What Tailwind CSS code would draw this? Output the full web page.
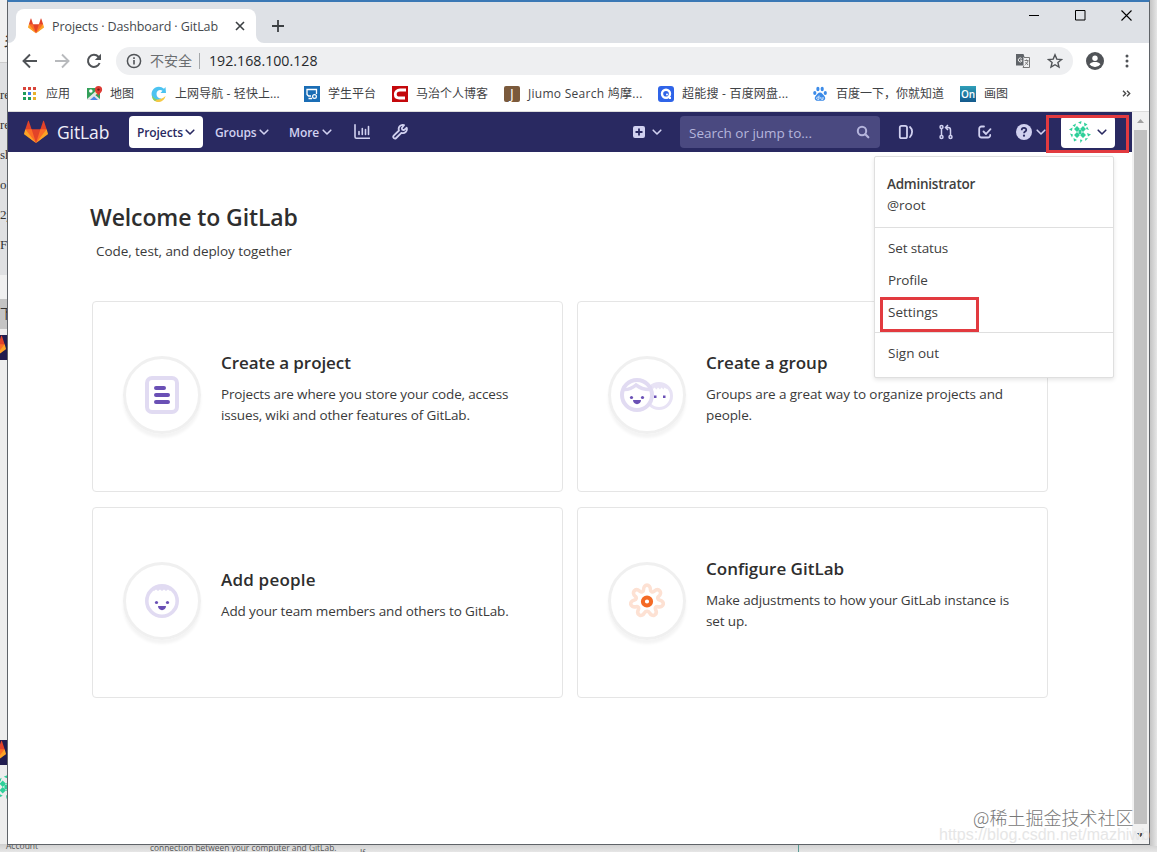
<!DOCTYPE html>
<html lang="zh-CN">
<head>
  <meta charset="UTF-8">
  <meta name="viewport" content="width=device-width, initial-scale=1.0">
  <title>Projects · Dashboard · GitLab</title>
  <script src="https://cdn.jsdelivr.net/npm/@tailwindcss/browser@4"></script>
  <style>
    body {
      font-family: "Open Sans", "Noto Sans CJK SC", sans-serif;
    }
  </style>
</head>
<body class="relative w-[1157px] h-[852px] overflow-hidden bg-[#e9e9e9] text-[#2e2e2e]">
  <!-- Shared symbols -->
  <svg class="hidden">
    <symbol id="tanuki" viewBox="0 0 36 36">
      <path fill="#e24329" d="M2 14l9.38 9v-9l-4-12.28c-.205-.632-1.176-.632-1.38 0z"/>
      <path fill="#e24329" d="M34 14l-9.38 9v-9l4-12.28c.205-.632 1.176-.632 1.38 0z"/>
      <path fill="#e24329" d="M18 34.38L3 14h30z"/>
      <path fill="#fc6d26" d="M18 34.38L11.38 14H2l4 11zM18 34.38L24.62 14H34l-4 11z"/>
      <path fill="#fca326" d="M2 14L.1 20.16c-.18.565 0 1.2.5 1.56L18 34.38zM34 14l1.9 6.16c.18.565 0 1.2-.5 1.56L18 34.38z"/>
    </symbol>
    <symbol id="chevron" viewBox="0 0 10 10">
      <path d="M1.200 3.200L5 7l3.800-3.800" fill="none" stroke="currentColor" stroke-width="1.600" stroke-linecap="round" stroke-linejoin="round"/>
    </symbol>
    <symbol id="identicon" viewBox="0 0 22 22">
      <g fill="#2fd09a">
        <path d="M8 5l3 3-3 3-3-3zM14 5l3 3-3 3-3-3zM8 11l3 3-3 3-3-3zM14 11l3 3-3 3-3-3z"/>
        <path d="M9.500 9h3v4h-3z"/>
        <path d="M3.500 4.500l3.500-2-1 3.500zM9 1.500l3.500-1.500-.5 3zM15 1.500l3.500 2-3 2zM18 5.500l2 3.500-3-1zM18 12l4 1.500-3 2zM16 17.500l3-.5-2.500 3zM11 18.500l2.500.5-2 3zM4.500 17l3.500 2-3 1.500zM1 12.500l3 1-1 3zM0 8.500l3.500-2-.5 3.500z"/>
      </g>
    </symbol>
  </svg>

  <!-- Windows behind the browser -->
  <div class="absolute left-0 top-0 w-2 h-full overflow-hidden bg-[#ededed] text-[13px] leading-[30px] font-['Liberation_Serif'] text-[#333]">
    <div class="h-[63px] bg-[#f0f0f0] border-b border-[#ccc] pt-[26px] pl-[3px] text-lg">乡</div>
    <div class="h-[212px] bg-[#dfe0e2] pt-[17px]">
      <div>re</div><div>re</div><div>sh</div><div>ol</div><div>2y</div><div>F7</div>
    </div>
    <div class="h-6 bg-[#f0f0f0]"></div>
    <div class="h-[30px] bg-[#c4c4c4]">下</div>
    <div class="h-[6px]"></div>
    <div class="h-[25px] bg-[#201c4f]"><svg class="w-6 h-6 -ml-[18px]"><use href="#tanuki"/></svg></div>
    <div class="h-[380px]"></div>
    <div class="h-[25px] bg-[#201c4f]"><svg class="w-6 h-6 -ml-[18px]"><use href="#tanuki"/></svg></div>
    <div class="h-[10px]"></div>
    <div class="h-[24px]"><svg class="w-6 h-6 -ml-[6px]"><use href="#identicon"/></svg></div>
  </div>
  <div class="absolute left-0 top-[844px] w-full h-2 overflow-hidden bg-linear-to-b from-[#cfcfcf] to-[#e6e6e6] text-[#555]">
    <span class="absolute left-[6px] -top-[5px] text-[8.500px] leading-[14px]">Account</span>
    <span class="absolute left-[150px] -top-[3px] text-[8.400px] leading-[14px] whitespace-nowrap">connection between your computer and GitLab.</span>
    <span class="absolute left-[360px] top-[2px] text-[8.400px] leading-[14px]">If</span>
    <span class="absolute left-[798px] top-0 w-px h-2 bg-[#5a9a94]"></span>
  </div>
  <div class="absolute left-[1150px] top-0 w-[7px] h-[846px] bg-linear-to-r from-[#c4c4c4] to-[#e6e6e6]"></div>

  <!-- Browser window -->
  <div class="absolute left-[7px] top-0 w-[1143px] h-[845px] flex flex-col bg-white border border-[#5f6368] border-t-2 border-t-[#3a78b5]">

    <!-- Tab strip -->
    <div class="h-[41px] shrink-0 flex items-end bg-[#dee1e6]">
      <svg class="w-2 h-2 text-white" viewBox="0 0 8 8"><path fill="currentColor" d="M8 0v8H0a8 8 0 0 0 8-8z"/></svg>
      <div class="w-[240px] h-[34px] flex items-center bg-white rounded-t-lg pl-3">
        <svg class="w-4 h-4 shrink-0"><use href="#tanuki"/></svg>
        <span class="w-[165px] ml-2 pt-[2px] text-[12.500px] tracking-[-0.09px] whitespace-nowrap text-[#45494d]">Projects · Dashboard · GitLab</span>
        <svg class="w-[10px] h-[10px] ml-[18px]" viewBox="0 0 10 10"><path d="M1 1l8 8M9 1L1 9" stroke="#3c4043" stroke-width="1.600"/></svg>
      </div>
      <svg class="w-2 h-2 text-white" viewBox="0 0 8 8"><path fill="currentColor" d="M0 0v8h8a8 8 0 0 1-8-8z"/></svg>
      <svg class="w-3 h-3 ml-2 mb-[11px]" viewBox="0 0 12 12"><path d="M6 0v12M0 6h12" stroke="#3c4043" stroke-width="1.800"/></svg>
      <div class="grow"></div>
      <div class="h-full flex items-start pt-[8px] gap-[35px] pr-[17px] text-black">
        <svg class="w-[11px] h-[11px]" viewBox="0 0 11 11"><path d="M0 5.500h10" stroke="currentColor"/></svg>
        <svg class="w-[11px] h-[11px]" viewBox="0 0 11 11"><path d="M.5.5h9.500v9.500H.5z" fill="none" stroke="currentColor"/></svg>
        <svg class="w-[11px] h-[11px]" viewBox="0 0 11 11"><path d="M.5.5l10 10M10.500.5l-10 10" stroke="currentColor" stroke-width="1.100"/></svg>
      </div>
    </div>

    <!-- Toolbar -->
    <div class="h-9 shrink-0 flex items-center pl-[14px] text-[#505357]">
      <svg class="w-4 h-4" viewBox="0 0 16 16"><path d="M15 8H2M8 1.500L1.500 8 8 14.500" fill="none" stroke="currentColor" stroke-width="1.900"/></svg>
      <svg class="w-4 h-4 ml-4 text-[#b8babd]" viewBox="0 0 16 16"><path d="M1 8h13M8 1.500L14.500 8 8 14.500" fill="none" stroke="currentColor" stroke-width="1.900"/></svg>
      <svg class="w-4 h-4 ml-4" viewBox="0 0 16 16"><path d="M13.600 10A6 6 0 1 1 12.400 3.800L14 5.400" fill="none" stroke="currentColor" stroke-width="2"/><path fill="currentColor" d="M15 .8V7H8.800z"/></svg>
      <div class="w-[957px] h-7 ml-[14px] flex items-center rounded-full bg-[#eeeff1] pl-[10px]">
        <svg class="w-4 h-4" viewBox="0 0 16 16"><circle cx="8" cy="8" r="6.600" fill="none" stroke="currentColor" stroke-width="1.500"/><path d="M8 7v4.500M8 4.300v1.700" stroke="currentColor" stroke-width="1.600"/></svg>
        <span class="w-[42px] ml-2 text-sm whitespace-nowrap text-[#6a6d70]">不安全</span>
        <span class="w-px h-4 ml-[7px] bg-[#a5a8ab]"></span>
        <span class="w-[110px] ml-[9px] text-[14.200px] whitespace-nowrap text-[#27292c]">192.168.100.128</span>
        <div class="grow"></div>
        <svg class="w-4 h-4" viewBox="0 0 16 16"><path fill="#5f6368" d="M1 1h7.500l1 3h-1v8.500H1z"/><path d="M9 4.500h5.500v10H8l1-2" fill="none" stroke="#777" stroke-width="1"/><path d="M9.500 7.500h4M11.500 6.500v1M13 8c-.5 2-2 3-3 3.500M10.500 9l2.500 3" fill="none" stroke="#777"/><path d="M6.700 5.500a2 2 0 1 0 0 2.900V7.100H5" fill="none" stroke="#eee" stroke-width="1"/></svg>
        <svg class="w-4 h-4 ml-4 mr-[10px]" viewBox="0 0 16 16"><path d="M8 1.800l1.800 4.300 4.700.4-3.600 3 1.100 4.600L8 11.700l-4 2.400 1.100-4.600-3.600-3 4.700-.4z" fill="none" stroke="currentColor" stroke-width="1.400"/></svg>
      </div>
      <svg class="w-[18px] h-[18px] ml-[13px]" viewBox="0 0 18 18"><circle cx="9" cy="9" r="9" fill="currentColor"/><circle cx="9" cy="6.200" r="2.700" fill="#fff"/><path fill="#fff" d="M3.500 12.300C4.500 10.600 7 10 9 10s4.500.6 5.500 2.300A6.500 6.500 0 0 1 9 15a6.500 6.500 0 0 1-5.500-2.700z"/></svg>
      <svg class="w-4 h-4 ml-[15px]" viewBox="0 0 16 16" fill="currentColor"><circle cx="8" cy="3" r="1.500"/><circle cx="8" cy="8" r="1.500"/><circle cx="8" cy="13" r="1.500"/></svg>
    </div>

    <!-- Bookmarks bar -->
    <div class="h-[33px] shrink-0 flex items-center pl-[14px] pb-[3px] border-b border-[#dcdcdc] text-xs whitespace-nowrap text-[#3f4245]">
      <div class="w-[65px] flex items-center gap-2">
        <svg class="w-4 h-4" viewBox="0 0 16 16">
          <path fill="#d9453a" d="M1 1h3v3H1zM6 1h3v3H6zM11 1h3v3h-3z"/>
          <path fill="#1f9d5b" d="M1 6h3v3H1zM1 11h3v3H1z"/><path fill="#3f7de0" d="M6 6h3v3H6z"/>
          <path fill="#e8b02c" d="M11 6h3v3h-3zM11 11h3v3h-3z"/><path fill="#1f9d5b" d="M6 11h3v3H6z"/>
        </svg>
        <span>应用</span>
      </div>
      <div class="w-16 flex items-center gap-[7px]">
        <svg class="w-4 h-4" viewBox="0 0 16 16">
          <path fill="#34a05a" d="M0 2h13v12H0z"/><path fill="#4a86e8" d="M6.500 8l6.500 6H1z"/><path fill="#e5e5e5" d="M0 14v-1L10 4l2 2-9 8zM7 8l6 5v1h-2L5.500 9z"/><path fill="#f4c63a" d="M8 6l3-3 2 2-3 3z"/>
          <circle cx="3.800" cy="5" r="1.800" fill="#fff"/>
          <path fill="#dd3b34" d="M11.500 0a3.600 3.600 0 0 0-3.600 3.700c0 2.800 3.100 3.300 3.600 6.800.5-3.500 3.600-4 3.600-6.800A3.600 3.600 0 0 0 11.500 0z"/>
          <circle cx="11.500" cy="3.600" r="1.200" fill="#7c1713"/>
        </svg>
        <span>地图</span>
      </div>
      <div class="w-[153px] flex items-center gap-2">
        <svg class="w-4 h-4" viewBox="0 0 16 16">
          <path fill="#4cc3f1" d="M14.500 1l.5 6H9.500l2-2.200C9 3 5.500 4.500 5.500 8c0 3 2.500 4.800 5 4.500-2 2.500-6.500 2.500-8.700-.5C-.6 8.500.6 4 4 1.800 7-.1 10.500.5 13 2.700z"/>
          <path fill="#f6c945" d="M1 10.500c2.500 4 9 4 13.500-.5-1 4-4 6-7.500 6-3 0-5.300-2.300-6-5.500z"/>
          <path fill="#7fd06a" d="M1 9c.8 2.500 3 4.200 5.500 4.500L4 15c-2-1-3.200-3.500-3-6z"/>
        </svg>
        <span class="tracking-[0.1px]">上网导航 - 轻快上...</span>
      </div>
      <div class="w-[88px] flex items-center gap-2">
        <svg class="w-4 h-4" viewBox="0 0 16 16"><path fill="#1a6db5" d="M0 0h16v16H0z"/><path d="M7 10H4.500L3 8.500V3.500h9.500V8M4.500 12.500H8" fill="none" stroke="#fff" stroke-width="1.300"/><circle cx="10.500" cy="10.500" r="1.900" fill="none" stroke="#fff" stroke-width="1.200"/></svg>
        <span>学生平台</span>
      </div>
      <div class="w-28 flex items-center gap-2">
        <svg class="w-4 h-4" viewBox="0 0 16 16"><path fill="#c4080c" d="M0 0h16v16H0z"/><path d="M14 4H8C5 4 3.300 5.800 3.300 8.200c0 2.500 1.500 3.800 4 3.800H13" fill="none" stroke="#fff" stroke-width="2.800"/></svg>
        <span>马治个人博客</span>
      </div>
      <div class="w-[154px] flex items-center gap-2">
        <span class="w-4 h-4 rounded-xs bg-[#7b5a3c] text-white text-[14px] leading-[15px] text-center">J</span>
        <span class="tracking-[0.28px]">Jiumo Search 鸠摩...</span>
      </div>
      <div class="w-[154px] flex items-center gap-2">
        <svg class="w-4 h-4" viewBox="0 0 16 16"><rect width="16" height="16" rx="3" fill="#2f64e8"/><circle cx="8" cy="7.800" r="4" fill="none" stroke="#fff" stroke-width="2.400"/><circle cx="9" cy="8.500" r="1" fill="#fff"/><path d="M11 12h2" stroke="#fff" stroke-width="1.800"/></svg>
        <span class="tracking-[0.22px]">超能搜 - 百度网盘...</span>
      </div>
      <div class="w-[148px] flex items-center gap-2">
        <svg class="w-4 h-4" viewBox="0 0 16 16" fill="#3c8be8"><ellipse cx="2.800" cy="7" rx="1.600" ry="2.100"/><ellipse cx="5.900" cy="3" rx="1.600" ry="2.300"/><ellipse cx="10.200" cy="3" rx="1.600" ry="2.300"/><ellipse cx="13.300" cy="7" rx="1.600" ry="2.100"/><path d="M8 6.500c2 0 2.800 2 4.300 3.500 1.800 2 .8 4.800-1.800 4.800H5.500c-2.600 0-3.600-2.800-1.800-4.800C5.200 8.500 6 6.500 8 6.500z"/><path d="M7 9.500v3.800H5.600c-1.400 0-1.400-2.200 0-2.200H7M8.800 11v1.300c0 .8.400 1 1 1h1.200V11" fill="none" stroke="#fff" stroke-width=".8"/></svg>
        <span>百度一下，你就知道</span>
      </div>
      <div class="flex items-center gap-2">
        <span class="w-4 h-4 bg-linear-to-b from-[#2f9fb8] to-[#14598c] text-white text-[10px] leading-4 text-center font-semibold">On</span>
        <span>画图</span>
      </div>
      <div class="grow"></div>
      <svg class="w-[9px] h-[7px] mr-[18px]" viewBox="0 0 9 7"><path d="M1 .7L3.700 3.500 1 6.300M5 .7l2.700 2.800L5 6.300" fill="none" stroke="#4a4a4a" stroke-width="1.400"/></svg>
    </div>

    <!-- Page -->
    <div class="grow flex min-h-0">
      <div class="w-[1124px] shrink-0 flex flex-col">

        <!-- GitLab navbar -->
        <nav class="h-10 shrink-0 flex items-center pl-4 bg-[#292961] text-[#d1d1f0] text-[12px] font-semibold tracking-[-0.1px] whitespace-nowrap">
          <svg class="w-6 h-6"><use href="#tanuki"/></svg>
          <span class="w-[81px] shrink-0 pl-[9px] text-[17.500px] font-normal text-[#f0f0fa]">GitLab</span>
          <div class="w-[74px] h-8 flex items-center justify-between rounded bg-white px-2 text-[#292961]">
            <span class="pt-px">Projects</span><svg class="w-[10px] h-[10px] shrink-0"><use href="#chevron"/></svg>
          </div>
          <div class="w-[54px] ml-3 flex items-center justify-between"><span class="pt-px">Groups</span><svg class="w-[10px] h-[10px] shrink-0"><use href="#chevron"/></svg></div>
          <div class="w-[43px] ml-5 flex items-center justify-between"><span class="pt-px">More</span><svg class="w-[10px] h-[10px] shrink-0"><use href="#chevron"/></svg></div>
          <svg class="w-4 h-4 ml-[22px]" viewBox="0 0 16 16"><path d="M1 .8v12c0 1 .4 1.400 1.400 1.400h13M5 10.500V7.500M8.300 10.500V4.500M11.500 10.500v-5M14.500 10.500V2.500" fill="none" stroke="currentColor" stroke-width="1.600" stroke-linecap="round"/></svg>
          <svg class="w-4 h-4 ml-[22px]" viewBox="0 0 16 16"><path d="M7 6.500a4 4 0 0 1 5-5.300L9.800 4l.4 1.600 1.700.5 2.800-2.300a4 4 0 0 1-5.300 5L4.200 14a1.700 1.700 0 0 1-2.500-2.300z" fill="none" stroke="currentColor" stroke-width="1.800" stroke-linejoin="round"/></svg>
          <svg class="w-3 h-3 ml-[225px]" viewBox="0 0 12 12"><path fill="currentColor" fill-rule="evenodd" d="M2 0h8a2 2 0 0 1 2 2v8a2 2 0 0 1-2 2H2a2 2 0 0 1-2-2V2a2 2 0 0 1 2-2zm3.100 2.500v2.600H2.500v1.800h2.600v2.600h1.800V6.900h2.600V5.100H6.900V2.500z"/></svg>
          <svg class="w-[10px] h-[10px] ml-[7px]"><use href="#chevron"/></svg>
          <div class="w-[200px] h-8 ml-[18px] flex items-center justify-between rounded bg-[#4a4980] pl-[9px] pr-[10px] text-[13.500px] tracking-normal font-normal text-[#b5b5dc]">
            <span class="pt-[2px]">Search or jump to...</span>
            <svg class="w-[14px] h-[14px]" viewBox="0 0 14 14"><circle cx="6" cy="6" r="4.200" fill="none" stroke="currentColor" stroke-width="2"/><path d="M9.300 9.300l3 3" stroke="currentColor" stroke-width="2.200" stroke-linecap="round"/></svg>
          </div>
          <svg class="w-4 h-4 ml-[18px]" viewBox="0 0 16 16" fill="none" stroke="currentColor" stroke-width="1.800" stroke-linecap="round"><rect x="1.800" y="1.800" width="7.200" height="12.400" rx="1.800"/><path d="M12 3c2.800 2.500 2.800 7 0 10"/></svg>
          <svg class="w-4 h-4 ml-6" viewBox="0 0 16 16" fill="none" stroke="currentColor" stroke-width="1.500"><circle cx="3.500" cy="3" r="1.500"/><circle cx="3.500" cy="13" r="1.500"/><circle cx="12.500" cy="13" r="1.500"/><path d="M3.500 4.500v7M12.500 11.500V6c0-1.500-.8-2.500-2.300-2.500H8M10 1L7.500 3.500 10 6"/></svg>
          <svg class="w-4 h-4 ml-[23px]" viewBox="0 0 16 16" fill="none" stroke="currentColor" stroke-width="1.800" stroke-linecap="round" stroke-linejoin="round"><path d="M7 2.500H4.500A2.300 2.300 0 0 0 2.200 4.800v6.400a2.300 2.300 0 0 0 2.300 2.300h6.400a2.300 2.300 0 0 0 2.300-2.300V11"/><path d="M6.500 7.500L9 10l4.500-4.800"/></svg>
          <svg class="w-4 h-4 ml-[23px]" viewBox="0 0 16 16"><circle cx="8" cy="8" r="8" fill="currentColor"/><path d="M5.700 6.200c0-3 4.700-2.900 4.600-.2 0 1.500-2.200 1.600-2.300 3.200" fill="none" stroke="#292961" stroke-width="1.700"/><circle cx="8" cy="11.700" r="1.100" fill="#292961"/></svg>
          <svg class="w-[10px] h-[10px] ml-1"><use href="#chevron"/></svg>
          <div class="w-[54px] h-8 ml-[15px] flex items-center rounded bg-white pl-2 text-[#292961]">
            <svg class="w-[22px] h-[22px]"><use href="#identicon"/></svg>
            <svg class="w-[10px] h-[10px] ml-[6px]"><use href="#chevron"/></svg>
          </div>
        </nav>

        <!-- Welcome -->
        <main class="pl-[84px] pt-[49px]">
          <h2 class="-ml-[2px] text-[23px] leading-8 tracking-[-0.1px] font-semibold">Welcome to GitLab</h2>
          <p class="ml-1 mt-2 text-[13.500px] leading-[21px] tracking-[-0.06px] text-[#3a3a3a]">Code, test, and deploy together</p>

          <div class="grid grid-cols-[471px_471px] auto-rows-[191px] gap-x-[14px] gap-y-[15px] mt-[39px]">
            <div class="flex items-center border border-[#e5e5e5] rounded pl-[30px]">
              <div class="w-[78px] h-[78px] shrink-0 -mt-1 flex items-center justify-center rounded-full border-[3px] border-[#f0f0f0] shadow-[0_4px_3px_#f4f4f4]">
                <svg class="w-[34px] h-[38px]" viewBox="0 0 34 38"><rect x="2" y="2" width="30" height="34" rx="5" fill="none" stroke="#e1dbf2" stroke-width="4"/><path d="M11 12h8M11 19h12M11 26h12" stroke="#6a50b5" stroke-width="4" stroke-linecap="round"/></svg>
              </div>
              <div class="ml-5 mb-[15px] w-[310px]">
                <h3 class="text-[17px] leading-[22px] mb-[10px] tracking-[-0.07px] font-semibold">Create a project</h3>
                <p class="text-[13.500px] leading-[21px] tracking-[-0.15px] text-[#3a3a3a]">Projects are where you store your code, access<br>issues, wiki and other features of GitLab.</p>
              </div>
            </div>

            <div class="flex items-center border border-[#e5e5e5] rounded pl-[30px]">
              <div class="w-[78px] h-[78px] shrink-0 -mt-1 flex items-center justify-center rounded-full border-[3px] border-[#f0f0f0] shadow-[0_4px_3px_#f4f4f4]">
                <svg class="w-[54px] h-[34px]" viewBox="0 0 54 34">
                  <circle cx="39" cy="18" r="12.500" fill="#fff" stroke="#e8e3f5" stroke-width="3"/>
                  <path fill="#e8e3f5" d="M30 9c5-5 14-5 18 0l-1.500 2-2-1.500-1 2-2-2-1.500 2-2-2-1.500 2-2-2-1.500 1.500z"/>
                  <path fill="#6a50b5" d="M34 17.500h2.500v2.500H34zM43 17.500h2.500v2.500H43z"/>
                  <circle cx="17" cy="17" r="15" fill="#fff" stroke="#e1dbf2" stroke-width="4"/>
                  <path d="M3 11.500c5 .5 9-1 13-4.500 4 3 9 5 15 4.500" fill="none" stroke="#e1dbf2" stroke-width="3.500"/>
                  <circle cx="11.500" cy="19.500" r="1.600" fill="#6a50b5"/><circle cx="22.500" cy="19.500" r="1.600" fill="#6a50b5"/>
                  <path fill="#6a50b5" d="M13 22h8c0 5.500-8 5.500-8 0z"/>
                </svg>
              </div>
              <div class="ml-5 mb-[15px] w-[310px]">
                <h3 class="text-[17px] leading-[22px] mb-[10px] font-semibold">Create a group</h3>
                <p class="text-[13.500px] leading-[21px] tracking-[-0.1px] text-[#3a3a3a]">Groups are a great way to organize projects and<br>people.</p>
              </div>
            </div>

            <div class="flex items-center border border-[#e5e5e5] rounded pl-[30px]">
              <div class="w-[78px] h-[78px] shrink-0 -mt-1 flex items-center justify-center rounded-full border-[3px] border-[#f0f0f0] shadow-[0_4px_3px_#f4f4f4]">
                <svg class="w-[34px] h-[34px]" viewBox="0 0 34 34">
                  <circle cx="17" cy="17" r="15.200" fill="#fff" stroke="#e1dbf2" stroke-width="3.600"/>
                  <path fill="#e1dbf2" d="M7 5c5-5 15-5 20 0l-2 2-2-1.500-2 1.500-2-1.500-2 1.500-2-1.500-2 1.500-2-1.500-2 1.500z"/>
                  <circle cx="11.500" cy="18.500" r="1.600" fill="#6a50b5"/><circle cx="22.500" cy="18.500" r="1.600" fill="#6a50b5"/>
                  <path fill="#6a50b5" d="M13 22h8c0 5.500-8 5.500-8 0z"/>
                </svg>
              </div>
              <div class="ml-5 mb-[15px] w-[310px]">
                <h3 class="text-[17px] leading-[22px] mb-[10px] tracking-[0.2px] font-semibold">Add people</h3>
                <p class="text-[13.500px] leading-[21px] tracking-[-0.13px] text-[#3a3a3a]">Add your team members and others to GitLab.</p>
              </div>
            </div>

            <div class="flex items-center border border-[#e5e5e5] rounded pl-[30px]">
              <div class="w-[78px] h-[78px] shrink-0 -mt-1 flex items-center justify-center rounded-full border-[3px] border-[#f0f0f0] shadow-[0_4px_3px_#f4f4f4]">
                <svg class="w-9 h-9" viewBox="0 0 36 36">
                  <path d="M14.500 7c0-6.500 7-6.500 7 0 0 2 2 2.500 3.500 1.300 5-4 9 1.500 4.700 5-1.700 1.300-1 3.200.8 3.700 6 1.500 4.500 8-1.500 6.700-2-.4-3.200 1-2.400 2.800 2.500 5.500-3.500 8.300-6.200 3.200-1-2-3.800-2-4.800 0-2.700 5.100-8.700 2.300-6.200-3.200.8-1.800-.4-3.200-2.400-2.800-6 1.300-7.500-5.200-1.500-6.700 1.800-.5 2.500-2.400.8-3.700-4.300-3.500-.3-9 4.700-5C12.500 9.500 14.500 9 14.500 7z" fill="none" stroke="#fde1d3" stroke-width="3.600"/>
                  <circle cx="18" cy="18.500" r="4.100" fill="none" stroke="#f46a25" stroke-width="4"/>
                </svg>
              </div>
              <div class="ml-5 mb-[15px] w-[310px]">
                <h3 class="text-[17px] leading-[22px] mb-[10px] font-semibold">Configure GitLab</h3>
                <p class="text-[13.500px] leading-[21px] tracking-[-0.13px] text-[#3a3a3a]">Make adjustments to how your GitLab instance is<br>set up.</p>
              </div>
            </div>
          </div>
        </main>
      </div>

      <!-- Scrollbar -->
      <div class="w-[17px] shrink-0 flex flex-col items-center justify-between bg-[#f1f1f1] py-[7px]">
        <svg class="w-[7px] h-1 shrink-0" viewBox="0 0 7 4"><path fill="#a0a0a0" d="M3.500 0L7 4H0z"/></svg>
        <div class="w-[13px] h-[694px] bg-[#c1c1c1] -mt-[2px]"></div>
        <svg class="w-[7px] h-1 shrink-0" viewBox="0 0 7 4"><path fill="#404040" d="M0 0h7L3.500 4z"/></svg>
      </div>
    </div>
  </div>

  <!-- User menu -->
  <div class="absolute left-[874px] top-[156px] w-[240px] h-[222px] bg-white border border-[#dfdfdf] rounded-xs shadow-[0_2px_4px_rgba(0,0,0,0.1)] text-[13.500px] text-[#404040]">
    <div class="h-[71px] pt-[17px] pl-3 border-b border-[#dfdfdf] leading-[21px]">
      <div class="font-semibold tracking-[-0.25px]">Administrator</div>
      <div>@root</div>
    </div>
    <div class="h-[105px] pt-1 pl-[13px] border-b border-[#dfdfdf] leading-8">
      <div class="tracking-[-0.15px]">Set status</div>
      <div class="tracking-[-0.15px]">Profile</div>
      <div>Settings</div>
    </div>
    <div class="pt-1 pl-[13px] leading-8">Sign out</div>
  </div>

  <!-- Highlights -->
  <div class="absolute left-[1046px] top-[115px] w-[83px] h-[38px] border-[3px] border-[#e23a3f]"></div>
  <div class="absolute left-[880px] top-[297px] w-[99px] h-[35px] border-[3px] border-[#e23a3f]"></div>

  <!-- Watermarks -->
  <div class="absolute left-[939px] top-[825px] text-[16px] leading-5 whitespace-nowrap font-['Liberation_Sans'] text-[#e6e6e6]">https://blog.csdn.net/mazhiwb</div>
  <div class="absolute left-[973px] top-[804px] text-[18px] leading-[26px] whitespace-nowrap font-['Noto_Sans_CJK_SC'] font-light text-[#777]">@稀土掘金技术社区</div>
</body>
</html>
